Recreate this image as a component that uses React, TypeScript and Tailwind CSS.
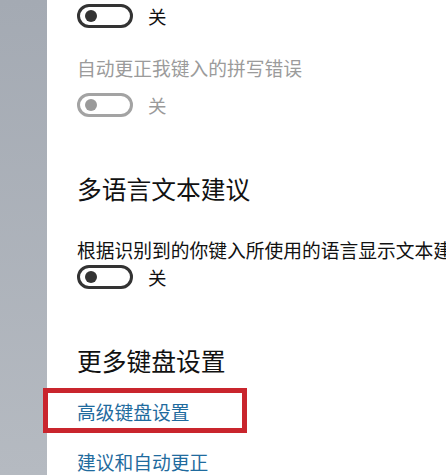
import React from "react";

const font = { fontFamily: '"Noto Sans CJK SC", "Microsoft YaHei", sans-serif' };

function Toggle({ disabled = false }: { disabled?: boolean }) {
  return (
    <div className="flex items-center h-[24px]">
      <div
        className={
          disabled
            ? "w-[56px] h-[24px] rounded-full border-[3px] border-[#a3a3a3] flex items-center pl-[5px]"
            : "w-[56px] h-[24px] rounded-full border-[3px] border-[#333333] flex items-center pl-[5px]"
        }
      >
        <div
          className={
            disabled
              ? "w-[12px] h-[12px] rounded-full bg-[#9a9a9a]"
              : "w-[12px] h-[12px] rounded-full bg-[#333333]"
          }
        />
      </div>
      <span
        className={
          disabled
            ? "ml-[15px] text-[18.5px] leading-[24px] text-[#9a9a9a]"
            : "ml-[15px] text-[18.5px] leading-[24px] text-[#111111]"
        }
      >
        关
      </span>
    </div>
  );
}

export default function App() {
  return (
    <div className="relative flex w-[446px] h-[475px] overflow-hidden bg-white" style={font}>
      <div className="w-[47px] h-full shrink-0 bg-gradient-to-b from-[#a4aab3] to-[#b5bac1]" />
      <div className="flex flex-col pl-[30px] whitespace-nowrap">
        <div className="mt-[4px]">
          <Toggle />
        </div>
        <div className="mt-[26px] h-[28px] leading-[28px] text-[18.75px] text-[#9b9b9b]">
          自动更正我键入的拼写错误
        </div>
        <div className="mt-[11px]">
          <Toggle disabled />
        </div>
        <div className="mt-[54px] h-[34px] leading-[34px] text-[24.75px] text-[#111111]">
          多语言文本建议
        </div>
        <div className="mt-[31px] h-[28px] leading-[28px] text-[18.75px] text-[#111111]">
          根据识别到的你键入所使用的语言显示文本建议
        </div>
        <div className="mt-[1px]">
          <Toggle />
        </div>
        <div className="mt-[54px] h-[34px] leading-[34px] text-[24.75px] text-[#111111]">
          更多键盘设置
        </div>
        <div className="mt-[21px] h-[28px] leading-[28px] text-[18.75px] text-[#1f6b9e]">
          高级键盘设置
        </div>
        <div className="mt-[22px] h-[28px] leading-[28px] text-[18.75px] text-[#1f6b9e]">
          建议和自动更正
        </div>
      </div>
      <div className="absolute left-[43px] top-[388px] w-[204px] h-[45px] border-[5px] border-[#c9252d]" />
    </div>
  );
}
